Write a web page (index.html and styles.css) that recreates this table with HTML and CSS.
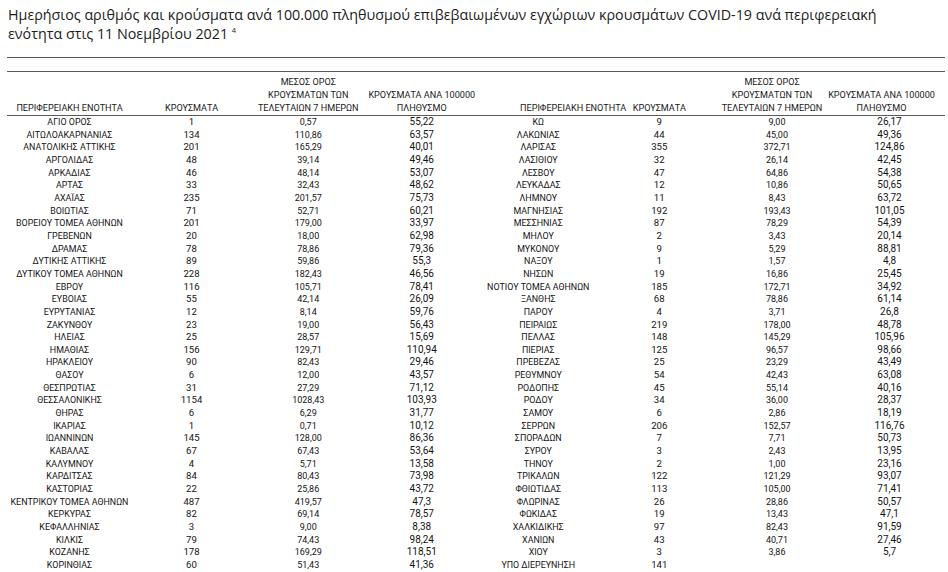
FILE: index.html
```html
<!DOCTYPE html>
<html lang="el">
<head>
<meta charset="utf-8">
<title>Κρούσματα COVID-19 ανά περιφερειακή ενότητα</title>
<link rel="stylesheet" href="styles.css">
</head>
<body>
<main class="page">
  <h1 class="title">Ημερήσιος αριθμός και κρούσματα ανά 100.000 πληθυσμού επιβεβαιωμένων εγχώριων κρουσμάτων COVID-19 ανά περιφερειακή ενότητα στις 11 Νοεμβρίου 2021 <sup class="note">4</sup></h1>
  <div class="band"></div>
  <table class="data">
    <colgroup>
      <col class="c-name-l"><col class="c-cases-l"><col class="c-avg-l"><col class="c-rate-l">
      <col class="c-name-r"><col class="c-cases-r"><col class="c-avg-r"><col class="c-rate-r">
    </colgroup>
    <thead>
      <tr>
        <th>ΠΕΡΙΦΕΡΕΙΑΚΗ ΕΝΟΤΗΤΑ</th>
        <th>ΚΡΟΥΣΜΑΤΑ</th>
        <th><span class="wide">ΜΕΣΟΣ ΟΡΟΣ<br>ΚΡΟΥΣΜΑΤΩΝ ΤΩΝ<br>ΤΕΛΕΥΤΑΙΩΝ 7 ΗΜΕΡΩΝ</span></th>
        <th><span class="wide">ΚΡΟΥΣΜΑΤΑ ΑΝΑ 100000<br>ΠΛΗΘΥΣΜΟ</span></th>
        <th class="th-name-r">ΠΕΡΙΦΕΡΕΙΑΚΗ ΕΝΟΤΗΤΑ</th>
        <th>ΚΡΟΥΣΜΑΤΑ</th>
        <th><span class="wide wide-avg-r">ΜΕΣΟΣ ΟΡΟΣ<br>ΚΡΟΥΣΜΑΤΩΝ ΤΩΝ<br>ΤΕΛΕΥΤΑΙΩΝ 7 ΗΜΕΡΩΝ</span></th>
        <th><span class="wide wide-last">ΚΡΟΥΣΜΑΤΑ ΑΝΑ 100000<br>ΠΛΗΘΥΣΜΟ</span></th>
      </tr>
    </thead>
    <tbody>
      <tr><td class="n">ΑΓΙΟ ΟΡΟΣ</td><td class="k">1</td><td class="m">0,57</td><td class="r">55,22</td><td class="n">ΚΩ</td><td class="k">9</td><td class="m">9,00</td><td class="r">26,17</td></tr>
      <tr><td class="n">ΑΙΤΩΛΟΑΚΑΡΝΑΝΙΑΣ</td><td class="k">134</td><td class="m">110,86</td><td class="r">63,57</td><td class="n">ΛΑΚΩΝΙΑΣ</td><td class="k">44</td><td class="m">45,00</td><td class="r">49,36</td></tr>
      <tr><td class="n">ΑΝΑΤΟΛΙΚΗΣ ΑΤΤΙΚΗΣ</td><td class="k">201</td><td class="m">165,29</td><td class="r">40,01</td><td class="n">ΛΑΡΙΣΑΣ</td><td class="k">355</td><td class="m">372,71</td><td class="r">124,86</td></tr>
      <tr><td class="n">ΑΡΓΟΛΙΔΑΣ</td><td class="k">48</td><td class="m">39,14</td><td class="r">49,46</td><td class="n">ΛΑΣΙΘΙΟΥ</td><td class="k">32</td><td class="m">26,14</td><td class="r">42,45</td></tr>
      <tr><td class="n">ΑΡΚΑΔΙΑΣ</td><td class="k">46</td><td class="m">48,14</td><td class="r">53,07</td><td class="n">ΛΕΣΒΟΥ</td><td class="k">47</td><td class="m">64,86</td><td class="r">54,38</td></tr>
      <tr><td class="n">ΑΡΤΑΣ</td><td class="k">33</td><td class="m">32,43</td><td class="r">48,62</td><td class="n">ΛΕΥΚΑΔΑΣ</td><td class="k">12</td><td class="m">10,86</td><td class="r">50,65</td></tr>
      <tr><td class="n">ΑΧΑΪΑΣ</td><td class="k">235</td><td class="m">201,57</td><td class="r">75,73</td><td class="n">ΛΗΜΝΟΥ</td><td class="k">11</td><td class="m">8,43</td><td class="r">63,72</td></tr>
      <tr><td class="n">ΒΟΙΩΤΙΑΣ</td><td class="k">71</td><td class="m">52,71</td><td class="r">60,21</td><td class="n">ΜΑΓΝΗΣΙΑΣ</td><td class="k">192</td><td class="m">193,43</td><td class="r">101,05</td></tr>
      <tr><td class="n">ΒΟΡΕΙΟΥ ΤΟΜΕΑ ΑΘΗΝΩΝ</td><td class="k">201</td><td class="m">179,00</td><td class="r">33,97</td><td class="n">ΜΕΣΣΗΝΙΑΣ</td><td class="k">87</td><td class="m">78,29</td><td class="r">54,39</td></tr>
      <tr><td class="n">ΓΡΕΒΕΝΩΝ</td><td class="k">20</td><td class="m">18,00</td><td class="r">62,98</td><td class="n">ΜΗΛΟΥ</td><td class="k">2</td><td class="m">3,43</td><td class="r">20,14</td></tr>
      <tr><td class="n">ΔΡΑΜΑΣ</td><td class="k">78</td><td class="m">78,86</td><td class="r">79,36</td><td class="n">ΜΥΚΟΝΟΥ</td><td class="k">9</td><td class="m">5,29</td><td class="r">88,81</td></tr>
      <tr><td class="n">ΔΥΤΙΚΗΣ ΑΤΤΙΚΗΣ</td><td class="k">89</td><td class="m">59,86</td><td class="r">55,3</td><td class="n">ΝΑΞΟΥ</td><td class="k">1</td><td class="m">1,57</td><td class="r">4,8</td></tr>
      <tr><td class="n">ΔΥΤΙΚΟΥ ΤΟΜΕΑ ΑΘΗΝΩΝ</td><td class="k">228</td><td class="m">182,43</td><td class="r">46,56</td><td class="n">ΝΗΣΩΝ</td><td class="k">19</td><td class="m">16,86</td><td class="r">25,45</td></tr>
      <tr><td class="n">ΕΒΡΟΥ</td><td class="k">116</td><td class="m">105,71</td><td class="r">78,41</td><td class="n">ΝΟΤΙΟΥ ΤΟΜΕΑ ΑΘΗΝΩΝ</td><td class="k">185</td><td class="m">172,71</td><td class="r">34,92</td></tr>
      <tr><td class="n">ΕΥΒΟΙΑΣ</td><td class="k">55</td><td class="m">42,14</td><td class="r">26,09</td><td class="n">ΞΑΝΘΗΣ</td><td class="k">68</td><td class="m">78,86</td><td class="r">61,14</td></tr>
      <tr><td class="n">ΕΥΡΥΤΑΝΙΑΣ</td><td class="k">12</td><td class="m">8,14</td><td class="r">59,76</td><td class="n">ΠΑΡΟΥ</td><td class="k">4</td><td class="m">3,71</td><td class="r">26,8</td></tr>
      <tr><td class="n">ΖΑΚΥΝΘΟΥ</td><td class="k">23</td><td class="m">19,00</td><td class="r">56,43</td><td class="n">ΠΕΙΡΑΙΩΣ</td><td class="k">219</td><td class="m">178,00</td><td class="r">48,78</td></tr>
      <tr><td class="n">ΗΛΕΙΑΣ</td><td class="k">25</td><td class="m">28,57</td><td class="r">15,69</td><td class="n">ΠΕΛΛΑΣ</td><td class="k">148</td><td class="m">145,29</td><td class="r">105,96</td></tr>
      <tr><td class="n">ΗΜΑΘΙΑΣ</td><td class="k">156</td><td class="m">129,71</td><td class="r">110,94</td><td class="n">ΠΙΕΡΙΑΣ</td><td class="k">125</td><td class="m">96,57</td><td class="r">98,66</td></tr>
      <tr><td class="n">ΗΡΑΚΛΕΙΟΥ</td><td class="k">90</td><td class="m">82,43</td><td class="r">29,46</td><td class="n">ΠΡΕΒΕΖΑΣ</td><td class="k">25</td><td class="m">23,29</td><td class="r">43,49</td></tr>
      <tr><td class="n">ΘΑΣΟΥ</td><td class="k">6</td><td class="m">12,00</td><td class="r">43,57</td><td class="n">ΡΕΘΥΜΝΟΥ</td><td class="k">54</td><td class="m">42,43</td><td class="r">63,08</td></tr>
      <tr><td class="n">ΘΕΣΠΡΩΤΙΑΣ</td><td class="k">31</td><td class="m">27,29</td><td class="r">71,12</td><td class="n">ΡΟΔΟΠΗΣ</td><td class="k">45</td><td class="m">55,14</td><td class="r">40,16</td></tr>
      <tr><td class="n">ΘΕΣΣΑΛΟΝΙΚΗΣ</td><td class="k">1154</td><td class="m">1028,43</td><td class="r">103,93</td><td class="n">ΡΟΔΟΥ</td><td class="k">34</td><td class="m">36,00</td><td class="r">28,37</td></tr>
      <tr><td class="n">ΘΗΡΑΣ</td><td class="k">6</td><td class="m">6,29</td><td class="r">31,77</td><td class="n">ΣΑΜΟΥ</td><td class="k">6</td><td class="m">2,86</td><td class="r">18,19</td></tr>
      <tr><td class="n">ΙΚΑΡΙΑΣ</td><td class="k">1</td><td class="m">0,71</td><td class="r">10,12</td><td class="n">ΣΕΡΡΩΝ</td><td class="k">206</td><td class="m">152,57</td><td class="r">116,76</td></tr>
      <tr><td class="n">ΙΩΑΝΝΙΝΩΝ</td><td class="k">145</td><td class="m">128,00</td><td class="r">86,36</td><td class="n">ΣΠΟΡΑΔΩΝ</td><td class="k">7</td><td class="m">7,71</td><td class="r">50,73</td></tr>
      <tr><td class="n">ΚΑΒΑΛΑΣ</td><td class="k">67</td><td class="m">67,43</td><td class="r">53,64</td><td class="n">ΣΥΡΟΥ</td><td class="k">3</td><td class="m">2,43</td><td class="r">13,95</td></tr>
      <tr><td class="n">ΚΑΛΥΜΝΟΥ</td><td class="k">4</td><td class="m">5,71</td><td class="r">13,58</td><td class="n">ΤΗΝΟΥ</td><td class="k">2</td><td class="m">1,00</td><td class="r">23,16</td></tr>
      <tr><td class="n">ΚΑΡΔΙΤΣΑΣ</td><td class="k">84</td><td class="m">80,43</td><td class="r">73,98</td><td class="n">ΤΡΙΚΑΛΩΝ</td><td class="k">122</td><td class="m">121,29</td><td class="r">93,07</td></tr>
      <tr><td class="n">ΚΑΣΤΟΡΙΑΣ</td><td class="k">22</td><td class="m">25,86</td><td class="r">43,72</td><td class="n">ΦΘΙΩΤΙΔΑΣ</td><td class="k">113</td><td class="m">105,00</td><td class="r">71,41</td></tr>
      <tr><td class="n">ΚΕΝΤΡΙΚΟΥ ΤΟΜΕΑ ΑΘΗΝΩΝ</td><td class="k">487</td><td class="m">419,57</td><td class="r">47,3</td><td class="n">ΦΛΩΡΙΝΑΣ</td><td class="k">26</td><td class="m">28,86</td><td class="r">50,57</td></tr>
      <tr><td class="n">ΚΕΡΚΥΡΑΣ</td><td class="k">82</td><td class="m">69,14</td><td class="r">78,57</td><td class="n">ΦΩΚΙΔΑΣ</td><td class="k">19</td><td class="m">13,43</td><td class="r">47,1</td></tr>
      <tr><td class="n">ΚΕΦΑΛΛΗΝΙΑΣ</td><td class="k">3</td><td class="m">9,00</td><td class="r">8,38</td><td class="n">ΧΑΛΚΙΔΙΚΗΣ</td><td class="k">97</td><td class="m">82,43</td><td class="r">91,59</td></tr>
      <tr><td class="n">ΚΙΛΚΙΣ</td><td class="k">79</td><td class="m">74,43</td><td class="r">98,24</td><td class="n">ΧΑΝΙΩΝ</td><td class="k">43</td><td class="m">40,71</td><td class="r">27,46</td></tr>
      <tr><td class="n">ΚΟΖΑΝΗΣ</td><td class="k">178</td><td class="m">169,29</td><td class="r">118,51</td><td class="n">ΧΙΟΥ</td><td class="k">3</td><td class="m">3,86</td><td class="r">5,7</td></tr>
      <tr class="last"><td class="n">ΚΟΡΙΝΘΙΑΣ</td><td class="k">60</td><td class="m">51,43</td><td class="r">41,36</td><td class="n">ΥΠΟ ΔΙΕΡΕΥΝΗΣΗ</td><td class="k">141</td><td class="m"></td><td class="r"></td></tr>
    </tbody>
  </table>
</main>
</body>
</html>
```
FILE: styles.css
```css
html, body {
  margin: 0;
  padding: 0;
  background: #ffffff;
}

body {
  color: #141414;
  font-family: Roboto, "Noto Sans", "DejaVu Sans", sans-serif;
}

.page {
  padding: 6px 0 0 7px;
  width: 938px;
}

.title {
  margin: 0 0 0 1px;
  max-width: 880px;
  font-family: "Open Sans", "Noto Sans", sans-serif;
  font-weight: 400;
  font-size: 14.3px;
  line-height: 18.5px;
  color: #1c1c1c;
}

.note {
  font-size: 7.5px;
  line-height: 0;
  vertical-align: 6px;
}

.band {
  margin-top: 14px;
  height: 13px;
  border-top: 1.5px solid #5a5a5a;
  border-bottom: 1.5px solid #5a5a5a;
}

.data {
  width: 938px;
  border-collapse: collapse;
  table-layout: fixed;
}

.c-name-l { width: 125px; }
.c-cases-l { width: 119px; }
.c-avg-l { width: 114.5px; }
.c-rate-l { width: 112.5px; }
.c-name-r { width: 120.5px; }
.c-cases-r { width: 121.5px; }
.c-avg-r { width: 114px; }
.c-rate-r { width: 111px; }

.data th {
  height: 43px;
  padding: 0;
  font-weight: 400;
  font-size: 9.1px;
  line-height: 12.9px;
  vertical-align: bottom;
  text-align: center;
  white-space: nowrap;
  border-bottom: 1.5px solid #5a5a5a;
  color: #1a1a1a;
}

.data th .wide {
  display: block;
  margin: 0 -14px;
}

.data th .wide-avg-r {
  margin: 0 -4px 0 -14px;
}

.data th .wide-last {
  margin: 0 0 0 -16px;
}

.data th.th-name-r {
  text-align: left;
  padding-left: 42px;
}

.data td {
  padding: 0;
  height: 12.66px;
  line-height: 12.66px;
  text-align: center;
  white-space: nowrap;
}

.data td.n { font-size: 8.9px; }
.data td.k { font-size: 9.6px; }
.data td.m { font-size: 9px; }
.data td.r { font-size: 10px; }

.data tr.last td {
  border-bottom: 1.5px solid #5a5a5a;
}
```
